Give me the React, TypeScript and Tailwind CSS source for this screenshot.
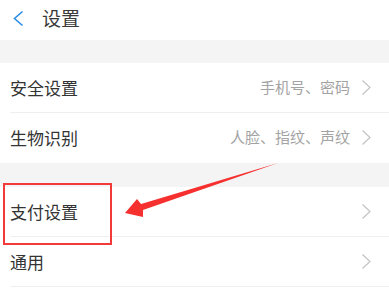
import React from 'react';

type Row = { label: string; hint?: string; divider?: boolean };

const Chevron = () => (
  <svg width="11" height="17" viewBox="0 0 11 17" className="shrink-0">
    <path d="M1.5 1.5 L9 8.5 L1.5 15.5" fill="none" stroke="#c2c2c2" strokeWidth="1.2" />
  </svg>
);

const SettingRow: React.FC<Row> = ({ label, hint, divider }) => (
  <div className="bg-white">
    <div className="h-[49px] flex items-center pl-[10px] pr-[17px]">
      <span className="text-[17px] text-[#333]">{label}</span>
      <div className="ml-auto flex items-center gap-[11px]">
        {hint && <span className="text-[15px] text-[#a3a3a3]">{hint}</span>}
        <Chevron />
      </div>
    </div>
    <div className={`ml-[10px] h-px ${divider ? 'bg-[#efefef]' : 'bg-white'}`} />
  </div>
);

export default function App() {
  return (
    <div
      className="relative w-[389px] h-[293px] overflow-hidden bg-white"
      style={{ fontFamily: '"Noto Sans CJK SC", "Noto Sans", sans-serif' }}
    >
      <div className="h-[40px] flex items-center pl-[12px] gap-[18px]">
        <svg width="12" height="17" viewBox="0 0 12 17" className="-mt-[4px]">
          <path d="M10.5 1.5 L2.5 8.5 L10.5 15.5" fill="none" stroke="#2b8de6" strokeWidth="1.6" />
        </svg>
        <span className="text-[19px] text-[#3a3a3a] -mt-[4px]">设置</span>
      </div>
      <div className="h-[23px] bg-[#f4f4f4]" />
      <SettingRow label="安全设置" hint="手机号、密码" divider />
      <SettingRow label="生物识别" hint="人脸、指纹、声纹" />
      <div className="h-[24px] bg-[#f4f4f4]" />
      <SettingRow label="支付设置" divider />
      <SettingRow label="通用" divider />

      {/* annotation */}
      <div className="absolute left-[3px] top-[183px] w-[109px] h-[62px] border-[2.5px] border-[#f23a3a]" />
      <svg className="absolute inset-0" width="389" height="293" viewBox="0 0 389 293">
        <polygon
          points="278,163 141,204 137,199 125,213 143,217 143,210"
          fill="#f5302f"
        />
      </svg>
    </div>
  );
}
